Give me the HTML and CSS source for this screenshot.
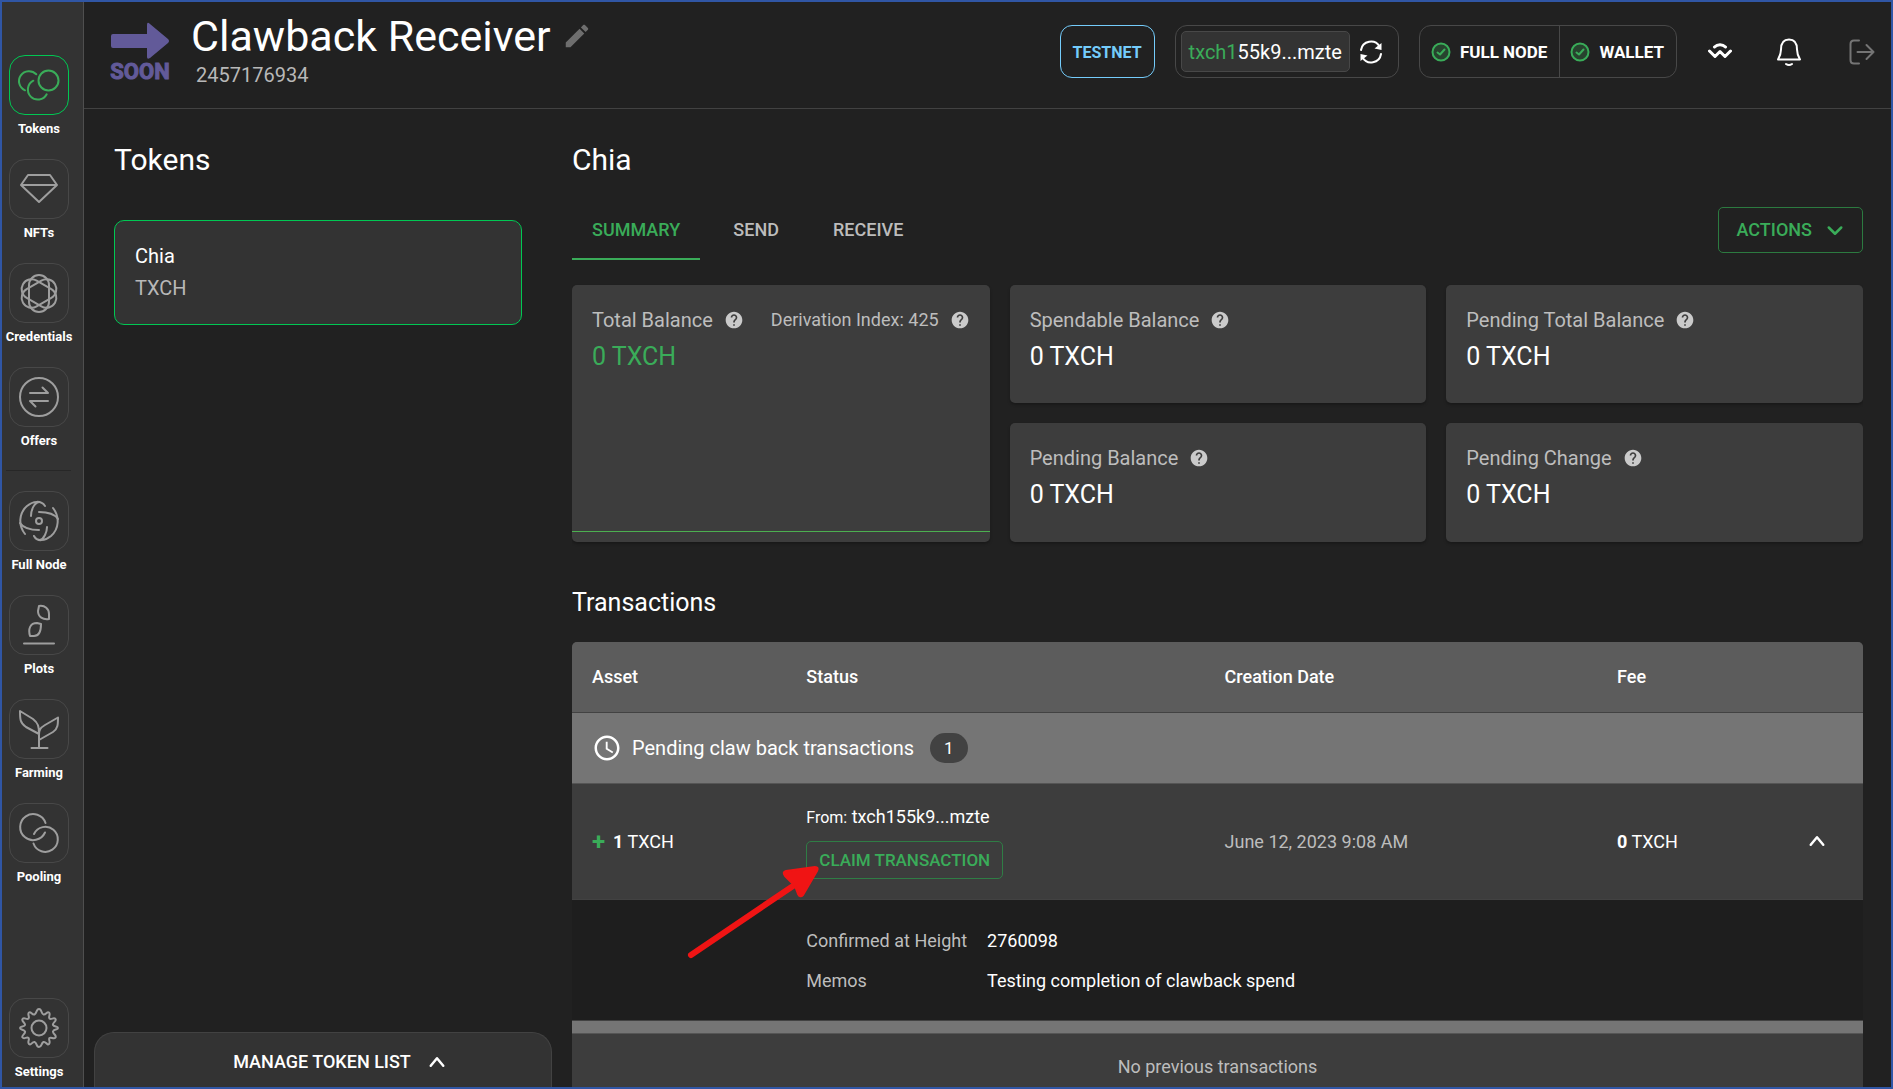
FILE: index.html
```html
<!DOCTYPE html>
<html lang="en">
<head>
<meta charset="utf-8">
<title>Clawback Receiver</title>
<link rel="stylesheet" href="styles.css">
</head>
<body>
<div class="app">
  <nav class="sidebar" aria-label="Main">
    <ul class="nav-list">
      <li><a class="nav-item active" href="#tokens"><span class="nav-icon"><svg viewBox="0 0 60 60"><circle cx="39.500" cy="25.500" r="10"/><path d="M27.300 19.300A10 10 0 1 0 16 35.300"/><path d="M24.300 25.700A10 10 0 1 0 37.700 39.300"/></svg></span>Tokens</a></li>
      <li><a class="nav-item" href="#nfts"><span class="nav-icon"><svg viewBox="0 0 60 60"><path d="M19 16H41L48 26L30 43L12 26ZM12 26H48"/></svg></span>NFTs</a></li>
      <li><a class="nav-item" href="#credentials"><span class="nav-icon"><svg viewBox="0 0 60 60"><rect x="20" y="12" width="20" height="37" rx="10"/><rect x="20" y="12" width="20" height="37" rx="10" transform="rotate(60 30 30.500)"/><rect x="20" y="12" width="20" height="37" rx="10" transform="rotate(120 30 30.500)"/></svg></span>Credentials</a></li>
      <li><a class="nav-item" href="#offers"><span class="nav-icon"><svg viewBox="0 0 60 60"><circle cx="30" cy="30" r="19"/><path d="M21 26H39L33.500 20.500M39 34H21L26.500 39.500"/></svg></span>Offers</a></li>
    </ul>
    <hr class="nav-divider">
    <ul class="nav-list">
      <li><a class="nav-item" href="#node"><span class="nav-icon"><svg viewBox="0 0 60 60"><circle cx="30" cy="30" r="3"/><path d="M16 43C9 34 10 22 18 15C24 10 32 9 36 15M22 25C22 19 25 12 30 11"/><path d="M44 17C51 26 50 38 42 45C36 50 28 51 25 45M38 36C38 41 35 48 31 49"/><path d="M30 21C37 21 45 22 49 28M30 39C23 39 15 38 11 32"/></svg></span>Full Node</a></li>
      <li><a class="nav-item" href="#plots"><span class="nav-icon"><svg viewBox="0 0 60 60"><path d="M15 48.500H45M30 11C36 10 40 14 40 19V24C34 25 29 22 29 16ZM32 29C32 35 31 41 25 41H21C19 34 21 28 28 28Z"/></svg></span>Plots</a></li>
      <li><a class="nav-item" href="#farming"><span class="nav-icon"><svg viewBox="0 0 60 60"><path d="M22.500 49H38.500M30 49V35C30 27 29 24 24 20L11 12C11 20 11 24 17 28L30 35M30 41L44 33C49 30 49 25 49 18.500L36 26C31 29 30 31 30 36"/></svg></span>Farming</a></li>
      <li><a class="nav-item" href="#pooling"><span class="nav-icon"><svg viewBox="0 0 60 60"><path d="M36.500 20A13 13 0 1 0 36 29.500"/><path d="M25 31A12.500 12.500 0 1 1 24.500 40.500"/></svg></span>Pooling</a></li>
    </ul>
    <a class="nav-item nav-settings" href="#settings"><span class="nav-icon"><svg viewBox="0 0 60 60"><circle cx="30" cy="30" r="7.500"/><path d="M30 11C33 11 32 16 34.500 16.500S38 13 40 14.500S39 19 40.500 20.500S45 19 46.500 21S43 25 44 27S49 28 49 30S44.500 31 44 33.500S48 37 46.500 39.500S42 38.500 40.500 40S42 44 40 46S37 43 34.500 44S33 49 30 49S28 44.500 25.500 44S22 48 20 46S21 41.500 19.500 40S15 41.500 13.500 39.500S17 35.500 16 33.500S11 32 11 30S15.500 29 16 27S12 23 13.500 21S18 22 19.500 20.500S18 16 20 14.500S23 17.500 25.500 16.500S27 11 30 11Z"/></svg></span>Settings</a>
  </nav>

  <div class="page">
    <header class="topbar">
      <div class="logo">
        <svg viewBox="0 0 60 38"><path d="M3 12H37V3Q37 -1 40 2L58 17Q60 19 58 21L40 36Q37 38 37 35V26H3Q1 26 1 24V14Q1 12 3 12Z"/></svg>
        <span>SOON</span>
      </div>
      <div class="identity">
        <div class="title-row">
          <h1 class="title">Clawback Receiver</h1>
          <button class="icon-button edit" aria-label="Rename"><svg viewBox="0 0 24 24"><path d="M3 17.250V21h3.750L17.810 9.940l-3.750-3.750L3 17.250zM20.710 7.040c.39-.39.39-1.020 0-1.410l-2.340-2.340c-.39-.39-1.020-.39-1.410 0l-1.830 1.830 3.750 3.750 1.830-1.830z"/></svg></button>
        </div>
        <p class="fingerprint">2457176934</p>
      </div>
      <div class="tools">
        <button class="testnet">TESTNET</button>
        <div class="address">
          <button class="address-text"><span class="prefix">txch1</span>55k9...mzte</button>
          <button class="icon-button refresh" aria-label="New address"><svg viewBox="0 0 24 24"><path d="M2 10A10 10 0 0 1 20.500 6.500M22 14A10 10 0 0 1 3.500 17.500"/><path class="solid" d="M22.500 3V10L15.500 8.500ZM1.500 21V14L8.500 15.500Z"/></svg></button>
        </div>
        <div class="statuses">
          <button class="status"><svg viewBox="0 0 20 20"><circle cx="10" cy="10" r="8.500"/><path d="M6.500 10.500L9 12.500L13.500 7.500"/></svg>FULL NODE</button>
          <button class="status"><svg viewBox="0 0 20 20"><circle cx="10" cy="10" r="8.500"/><path d="M6.500 10.500L9 12.500L13.500 7.500"/></svg>WALLET</button>
        </div>
        <button class="icon-button connect" aria-label="WalletConnect"><svg viewBox="0 0 24 24"><path d="M1.500 11L7 16.500L12 11.500L17 16.500L22.500 11M6.500 7C9.500 4 14.500 4 17.500 7"/></svg></button>
        <button class="icon-button bell" aria-label="Notifications"><svg viewBox="0 0 26 30"><path d="M2 22.500C4 19 5 17 5 12.500C5 6 8 2.500 13 2.500S21 6 21 12.500C21 17 22 19 24 22.500ZM10 27Q13 29 16 27"/></svg></button>
        <button class="icon-button logout" aria-label="Log out"><svg viewBox="0 0 26 26"><path d="M10 1.500H5Q1.500 1.500 1.500 5V21Q1.500 24.500 5 24.500H10M8.500 13H24.500M17.500 6L24.500 13L17.500 20"/></svg></button>
      </div>
    </header>

    <div class="content">
      <aside class="tokens">
        <h2 class="heading">Tokens</h2>
        <a class="token-card" href="#chia"><span class="token-name">Chia</span><span class="token-unit">TXCH</span></a>
        <button class="manage">MANAGE TOKEN LIST<svg class="chevron" viewBox="0 0 16 16"><path d="M3 11L8 5L13 11"/></svg></button>
      </aside>

      <main class="wallet">
        <h2 class="heading">Chia</h2>
        <div class="tab-row">
          <div class="tabs" role="tablist">
            <button class="tab selected" role="tab" aria-selected="true">SUMMARY</button>
            <button class="tab" role="tab">SEND</button>
            <button class="tab" role="tab">RECEIVE</button>
          </div>
          <button class="actions">ACTIONS<svg class="chevron" viewBox="0 0 16 16"><path d="M3 6L8 11L13 6"/></svg></button>
        </div>

        <svg class="defs" aria-hidden="true"><symbol id="help" viewBox="0 0 24 24"><path d="M12 2C6.480 2 2 6.480 2 12s4.480 10 10 10 10-4.480 10-10S17.520 2 12 2zm1 17h-2v-2h2v2zm2.070-7.750l-.9.92C13.450 12.900 13 13.500 13 15h-2v-.5c0-1.100.45-2.100 1.170-2.830l1.240-1.260c.37-.36.59-.86.59-1.410 0-1.100-.9-2-2-2s-2 .9-2 2H8c0-2.210 1.790-4 4-4s4 1.790 4 4c0 .88-.36 1.680-.93 2.250z"/></symbol></svg>
        <section class="cards">
          <article class="card total">
            <div class="card-label">Total Balance<svg class="help"><use href="#help"/></svg><span class="derivation">Derivation Index: 425</span><svg class="help"><use href="#help"/></svg></div>
            <div class="card-value">0 TXCH</div>
            <div class="chart-line"></div>
          </article>
          <article class="card"><div class="card-label">Spendable Balance<svg class="help"><use href="#help"/></svg></div><div class="card-value">0 TXCH</div></article>
          <article class="card"><div class="card-label">Pending Total Balance<svg class="help"><use href="#help"/></svg></div><div class="card-value">0 TXCH</div></article>
          <article class="card"><div class="card-label">Pending Balance<svg class="help"><use href="#help"/></svg></div><div class="card-value">0 TXCH</div></article>
          <article class="card"><div class="card-label">Pending Change<svg class="help"><use href="#help"/></svg></div><div class="card-value">0 TXCH</div></article>
        </section>

        <h3 class="subheading">Transactions</h3>
        <table class="transactions">
          <colgroup><col class="col-asset"><col class="col-status"><col class="col-date"><col class="col-fee"><col></colgroup>
          <thead><tr><th>Asset</th><th>Status</th><th>Creation Date</th><th>Fee</th><th></th></tr></thead>
          <tbody>
            <tr class="group-row"><td colspan="5"><div class="group"><svg class="clock" viewBox="0 0 24 24"><path d="M11.990 2C6.470 2 2 6.480 2 12s4.470 10 9.990 10C17.520 22 22 17.520 22 12S17.520 2 11.990 2zM12 20c-4.420 0-8-3.580-8-8s3.580-8 8-8 8 3.580 8 8-3.580 8-8 8zm.5-13H11v6l5.250 3.150.75-1.230-4.500-2.670z"/></svg>Pending claw back transactions<span class="count">1</span></div></td></tr>
            <tr class="tx-row">
              <td><div class="amount"><span class="plus">+</span><span><b>1</b> TXCH</span></div></td>
              <td class="claim-cell"><div class="from"><small>From:</small> txch155k9...mzte</div><button class="claim">CLAIM TRANSACTION</button>
                <svg class="pointer" viewBox="0 0 140 100" aria-hidden="true"><path class="shaft" d="M11 89L116 18"/><path class="head" d="M105 10Q102 6 106 5L135 1Q139 1 137 5L123 29Q120 32 118 28L115 20Z"/></svg></td>
              <td class="muted">June 12, 2023 9:08 AM</td>
              <td><b>0</b> TXCH</td>
              <td class="toggle-cell"><button class="icon-button" aria-label="Collapse"><svg class="chevron" viewBox="0 0 16 16"><path d="M3 11L8 5L13 11"/></svg></button></td>
            </tr>
            <tr class="detail-row"><td></td><td colspan="4"><dl class="details"><dt>Confirmed at Height</dt><dd>2760098</dd><dt>Memos</dt><dd>Testing completion of clawback spend</dd></dl></td></tr>
            <tr class="strip-row"><td colspan="5"></td></tr>
            <tr class="empty-row"><td colspan="5">No previous transactions</td></tr>
          </tbody>
        </table>
      </main>
    </div>
  </div>
</div>
</body>
</html>
```
FILE: styles.css
```css
* { box-sizing: border-box; }
body { margin: 0; background: #212121; color: #fff; font-family: Roboto, "Liberation Sans", sans-serif; font-size: 18px; line-height: 24px; }
button { font: inherit; color: inherit; background: none; border: 0; padding: 0; cursor: pointer; }
a { color: inherit; text-decoration: none; }
h1, h2, h3, p, ul, dl, dd { margin: 0; padding: 0; font-weight: 400; }
ul { list-style: none; }
svg { display: block; flex: none; fill: none; stroke: currentColor; stroke-width: 2; stroke-linecap: round; stroke-linejoin: round; }

.app { display: flex; height: 100vh; border: 2px solid #3056a5; overflow: hidden; }

.sidebar { flex: none; display: flex; flex-direction: column; width: 82px; padding: 53px 7px 7px 0; background: #333; border-right: 1px solid #4f4f4f; }
.nav-list { display: flex; flex-direction: column; gap: 22px; }
.nav-item { display: flex; flex-direction: column; align-items: center; gap: 6px; font-size: 13px; line-height: 16px; font-weight: 700; }
.nav-icon { display: flex; align-items: center; justify-content: center; width: 60px; height: 60px; border: 1px solid #484848; border-radius: 16px; color: #9e9e9e; }
.nav-icon svg { width: 60px; height: 60px; }
.active .nav-icon { color: #3aac59; border-color: #00c853; }
.nav-divider { width: 65px; height: 1px; margin: 21px 4px 20px; border: 0; background: #272727; }
.nav-settings { margin-top: auto; }

.page { flex: 1; min-width: 0; display: flex; flex-direction: column; }
.topbar { flex: none; display: flex; height: 107px; padding: 0 16px 0 25px; border-bottom: 1px solid #424242; }
.logo { display: flex; flex-direction: column; align-items: center; width: 62px; margin-top: 20px; color: #625a99; }
.logo svg { width: 60px; height: 38px; fill: currentColor; stroke: none; }
.logo span { font-size: 22px; line-height: 24px; font-weight: 700; -webkit-text-stroke: 1px currentColor; }
.identity { margin: 8px 0 0 20px; }
.title-row { display: flex; align-items: center; gap: 11px; }
.title { font-size: 43px; line-height: 52px; }
.fingerprint { padding-left: 5px; font-size: 20px; line-height: 26px; color: #b8b8b8; }
.icon-button svg { width: 24px; height: 24px; }
.edit svg { width: 30px; height: 30px; fill: #6e6e6e; stroke: none; }
.tools { display: flex; align-items: center; height: 53px; margin: 23px 0 0 auto; }
.testnet { height: 53px; padding: 2px 12px 0; border: 1px solid #74ccfb; border-radius: 12px; color: #74ccfb; font-size: 16px; font-weight: 700; }
.address { display: flex; align-items: center; height: 53px; margin-left: 20px; padding: 0 15px 0 5px; border: 1px solid #484848; border-radius: 12px; gap: 9px; }
.address-text { height: 41px; padding: 0 7px; border: 1px solid #484848; border-radius: 5px; background: #333; font-size: 20px; }
.prefix { color: #3aac59; }
.refresh .solid { fill: currentColor; stroke: none; }
.statuses { display: flex; height: 53px; margin-left: 20px; border: 1px solid #484848; border-radius: 12px; }
.status { display: flex; align-items: center; gap: 9px; padding: 0 12px 0 11px; font-size: 17px; font-weight: 700; }
.status + .status { border-left: 1px solid #484848; padding-left: 10px; }
.status svg { width: 20px; height: 20px; color: #3aac59; fill: #27432e; }
.connect { margin-left: 31px; }
.connect svg { stroke-width: 3; }
.bell { margin-left: 44px; }
.bell svg { width: 26px; height: 30px; }
.logout { margin-left: 47px; color: #757575; }
.logout svg { width: 26px; height: 26px; }

.content { flex: 1; min-height: 0; display: grid; grid-template-columns: 458px minmax(0, 1fr); gap: 20px; padding: 0 28px 0 10px; }
.heading { font-size: 30px; line-height: 40px; }
.tokens { display: flex; flex-direction: column; padding-top: 31px; }
.tokens .heading { margin-left: 20px; }
.token-card { display: flex; flex-direction: column; gap: 8px; margin: 40px 30px 0 20px; padding: 23px 20px 24px; border: 1px solid #00c853; border-radius: 10px; background: #333; font-size: 20px; }
.token-unit { color: #b8b8b8; }
.manage { display: flex; align-items: center; justify-content: center; gap: 16px; height: 55px; margin-top: auto; padding: 3px 0 0 34px; border: 1px solid #424242; border-bottom: 0; border-radius: 20px 20px 0 0; background: #333; font-weight: 500; }
.chevron { width: 20px; height: 20px; }
.wallet { padding-top: 31px; overflow: hidden; }
.tab-row { display: flex; align-items: center; justify-content: space-between; margin-top: 20px; }
.tabs { display: flex; }
.tab { height: 60px; min-width: 112px; padding: 0 20px; color: #bcbcbc; font-weight: 500; }
.selected { color: #3aac59; border-bottom: 2px solid #3aac59; padding-top: 2px; }
.actions { display: flex; align-items: center; gap: 13px; height: 46px; padding: 0 17px 0 18px; border: 1px solid #2c7a40; border-radius: 5px; color: #3aac59; font-weight: 500; }

.defs { position: absolute; width: 0; height: 0; }
.cards { display: grid; grid-template-columns: repeat(3, 1fr); grid-template-rows: 118px 119px; gap: 20px; margin-top: 25px; }
.card { padding: 19px 20px; border-radius: 5px; background: #3d3d3d; box-shadow: 0 2px 3px rgba(0, 0, 0, .25); }
.total { grid-row: span 2; display: flex; flex-direction: column; }
.card-label { display: flex; align-items: center; gap: 11px; height: 32px; font-size: 20px; white-space: nowrap; color: #bdbdbd; }
.help { width: 20px; height: 20px; fill: #cacaca; stroke: none; }
.derivation { margin-left: 16px; font-size: 18px; }
.card-value { font-size: 25px; line-height: 42px; }
.total .card-value { color: #3aac59; }
.chart-line { height: 1px; margin: auto -20px -9px; background: #4caf50; }

.subheading { margin: 41px 0 19px; font-size: 25px; line-height: 40px; }
.transactions { width: 100%; table-layout: fixed; border-collapse: separate; border-spacing: 0; border-radius: 5px 5px 0 0; overflow: hidden; background: #3d3d3d; }
.col-asset { width: 16.6%; }
.col-status { width: 32.4%; }
.col-date { width: 30.4%; }
.col-fee { width: 12%; }
.transactions th, .transactions td { padding: 0 20px; text-align: left; border-bottom: 1px solid #424242; }
.transactions th { height: 71px; background: #5c5c5c; font-weight: 500; }
.transactions .group-row td { height: 71px; background: #757575; border-color: #555; }
.group { display: flex; align-items: center; gap: 10px; font-size: 20px; }
.clock { width: 30px; height: 30px; fill: #fff; stroke: none; }
.count { margin-left: 6px; padding: 3px 14px; border-radius: 15px; background: #424242; font-size: 17px; }
.transactions .tx-row td { height: 116px; }
.amount { display: flex; align-items: center; gap: 8px; }
.plus { color: #3aac59; font-size: 24px; font-weight: 700; }
.tx-row b { font-weight: 700; }
.transactions .muted { color: #bdbdbd; }
.claim-cell { position: relative; }
.from small { font-size: 16px; }
.claim { height: 38px; margin-top: 11px; padding: 0 12px; border: 1px solid #2f7d45; border-radius: 5px; color: #3aac59; font-size: 17px; font-weight: 500; }
.pointer { position: absolute; left: -106px; top: 82px; width: 140px; height: 100px; color: #f01414; }
.pointer .shaft { stroke-width: 6; }
.pointer .head { fill: currentColor; stroke-width: 2; }
.transactions .toggle-cell { text-align: right; }
.toggle-cell .icon-button { padding: 4px 16px; }
.toggle-cell svg { width: 20px; height: 20px; }
.transactions .detail-row td { height: 121px; background: #1e1e1e; }
.details { display: grid; grid-template-columns: max-content 1fr; gap: 16px 20px; padding-top: 2px; }
.details dt { color: #bdbdbd; }
.transactions .strip-row td { height: 13px; background: #757575; border-color: #555; }
.transactions .empty-row td { height: 66px; text-align: center; color: #bdbdbd; border: 0; }
```
